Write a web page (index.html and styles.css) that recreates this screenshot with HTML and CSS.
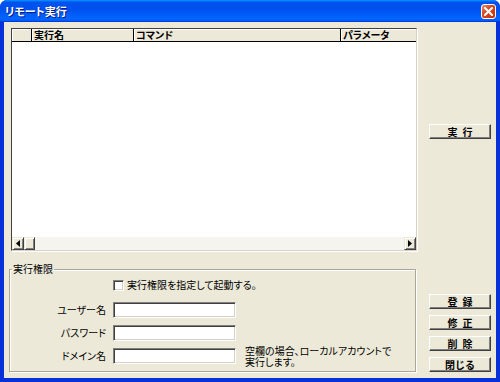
FILE: index.html
```html
<!DOCTYPE html>
<html lang="ja">
<head>
    <meta charset="UTF-8">
    <meta name="viewport" content="width=device-width, initial-scale=1.0">
    <title>リモート実行</title>
    <link rel="stylesheet" href="styles.css">
</head>
<body>
    <div class="window">
        <div class="titlebar">
            <span class="title">リモート実行</span>
            <button class="close" title="閉じる">
                <svg width="9" height="9" viewBox="0 0 9 9">
                    <path d="M1 1 L8 8 M8 1 L1 8" stroke="#fff" stroke-width="2" stroke-linecap="square"/>
                </svg>
            </button>
        </div>

        <div class="client">
            <div class="main">
                <div class="listview">
                    <div class="lv-header">
                        <span class="col c0"></span>
                        <span class="col c1">実行名</span>
                        <span class="col c2">コマンド</span>
                        <span class="col c3">パラメータ</span>
                    </div>
                    <div class="lv-body"></div>
                    <div class="hscroll">
                        <span class="sb-btn">
                            <svg width="4" height="7" viewBox="0 0 4 7"><path d="M4 0 L0 3.5 L4 7 Z" fill="#000"/></svg>
                        </span>
                        <span class="sb-thumb"></span>
                        <span class="sb-track"></span>
                        <span class="sb-btn">
                            <svg width="4" height="7" viewBox="0 0 4 7"><path d="M0 0 L4 3.5 L0 7 Z" fill="#000"/></svg>
                        </span>
                    </div>
                </div>

                <fieldset class="group">
                    <legend>実行権限</legend>
                    <label class="check-row">
                        <input type="checkbox" class="check">
                        <span>実行権限を指定して起動する。</span>
                    </label>
                    <div class="form-grid">
                        <label class="field-label">ユーザー名</label>
                        <input type="text" class="field">
                        <span></span>

                        <label class="field-label">パスワード</label>
                        <input type="password" class="field">
                        <span></span>

                        <label class="field-label">ドメイン名</label>
                        <input type="text" class="field">
                        <div class="hint">
                            <span class="hint-line">空欄の場合、ローカルアカウントで</span>
                            <span class="hint-line">実行します。</span>
                        </div>
                    </div>
                </fieldset>
            </div>

            <div class="side">
                <button class="btn btn-run">実&#x2002;行</button>
                <div class="side-bottom">
                    <button class="btn">登&#x2002;録</button>
                    <button class="btn">修&#x2002;正</button>
                    <button class="btn">削&#x2002;除</button>
                    <button class="btn">閉じる</button>
                </div>
            </div>
        </div>
    </div>
</body>
</html>
```

FILE: styles.css
```css
* {
    box-sizing: border-box;
}
body {
    margin: 0;
    background: #fff;
    font-family: "Noto Sans CJK JP", "Noto Sans", sans-serif;
    font-size: 10px;
    line-height: 12px;
    font-feature-settings: "palt";
    color: #000;
}
.window {
    width: 500px;
    height: 382px;
    display: flex;
    flex-direction: column;
    background: #0831d9;
    border-radius: 7px 7px 0 0;
    overflow: hidden;
}
.titlebar {
    height: 22px;
    flex: none;
    display: flex;
    align-items: center;
    justify-content: space-between;
    padding: 0 4px 0 5px;
    background: linear-gradient(#0997ff, #0053ee 10%, #0050ee 40%, #0066ff 85%, #005bff 93%, #003dd7 97%, #003dd7);
}
.title {
    color: #fff;
    font-weight: bold;
    font-size: 11px;
    text-shadow: 1px 1px #0a1883;
}
.close {
    width: 15px;
    height: 15px;
    padding: 0;
    border: 1px solid #fff;
    border-radius: 3px;
    background: linear-gradient(135deg, #e88a6a, #d7441c 45%, #c2350a);
    display: flex;
    align-items: center;
    justify-content: center;
}
.client {
    flex: 1;
    margin: 0 4px 4px 4px;
    background: #ece9d8;
    display: flex;
    padding: 6px 5px 6px 7px;
}
.main {
    width: 406px;
    display: flex;
    flex-direction: column;
}
.listview {
    height: 223px;
    display: flex;
    flex-direction: column;
    background: #fff;
    border: 1px solid;
    border-color: #404040 #d4d0c8 #d4d0c8 #404040;
    box-shadow: 1px 1px 0 #fff;
}
.lv-header {
    display: flex;
    height: 13px;
    flex: none;
    background: #ece9d8;
    border-bottom: 1px solid #000;
}
.col {
    flex: none;
    height: 12px;
    padding-left: 2px;
    font-weight: bold;
    line-height: 12px;
    white-space: nowrap;
    border-right: 1px solid #000;
    box-shadow: inset 1px 1px #fff;
}
.c0 { width: 20px; }
.c1 { width: 102px; }
.c2 { width: 207px; }
.c3 { flex: 1; border-right: none; }
.lv-body {
    flex: 1;
}
.hscroll {
    height: 13px;
    flex: none;
    display: flex;
    background: #f5f4ef;
}
.sb-btn,
.sb-thumb {
    width: 12px;
    height: 13px;
    flex: none;
    background: #ece9d8;
    border: 1px solid;
    border-color: #ece9d8 #404040 #404040 #ece9d8;
    box-shadow: inset 1px 1px #fff, inset -1px -1px #808080;
    display: flex;
    align-items: center;
    justify-content: center;
}
.sb-thumb {
    width: 11px;
}
.sb-track {
    flex: 1;
}
.group {
    flex: 1;
    margin: 12px 0 0 -2px;
    width: 407px;
    min-inline-size: 0;
    padding: 0;
    border: 1px solid #aca899;
    box-shadow: inset 1px 1px #fff, 1px 1px 0 #fff;
}
.group legend {
    margin-left: 2px;
    padding: 0 1px;
    line-height: 12px;
}
.check-row {
    display: flex;
    align-items: center;
    gap: 3px;
    margin: 4px 0 0 103px;
}
.check {
    appearance: none;
    margin: 0;
    width: 11px;
    height: 11px;
    background: #fff;
    border: 1px solid;
    border-color: #808080 #fff #fff #808080;
    box-shadow: inset 1px 1px #404040, inset -1px -1px #d4d0c8;
}
.form-grid {
    display: grid;
    grid-template-columns: 96px 123px 1fr;
    grid-auto-rows: 16px;
    column-gap: 7px;
    row-gap: 7px;
    margin-top: 11px;
    align-items: center;
}
.field-label {
    text-align: right;
}
.field {
    width: 123px;
    height: 16px;
    margin: 0;
    padding: 0 2px;
    font: inherit;
    background: #fff;
    border: 1px solid;
    border-color: #808080 #fff #fff #808080;
    box-shadow: inset 1px 1px #404040, inset -1px -1px #d4d0c8;
    outline: none;
}
.hint {
    margin-left: 2px;
    display: flex;
    flex-direction: column;
}
.hint-line {
    display: block;
    height: 11px;
    line-height: 11px;
    white-space: nowrap;
}
.side {
    margin-left: 12px;
    width: 62px;
    display: flex;
    flex-direction: column;
}
.btn {
    width: 62px;
    height: 15px;
    padding: 0;
    font: inherit;
    font-weight: bold;
    font-feature-settings: normal;
    line-height: 12px;
    background: #ece9d8;
    border: 1px solid;
    border-color: #fff #404040 #404040 #fff;
    box-shadow: inset -1px -1px #808080;
    cursor: pointer;
}
.btn-run {
    margin-top: 96px;
}
.side-bottom {
    margin-top: auto;
    display: flex;
    flex-direction: column;
    gap: 6px;
}
```
